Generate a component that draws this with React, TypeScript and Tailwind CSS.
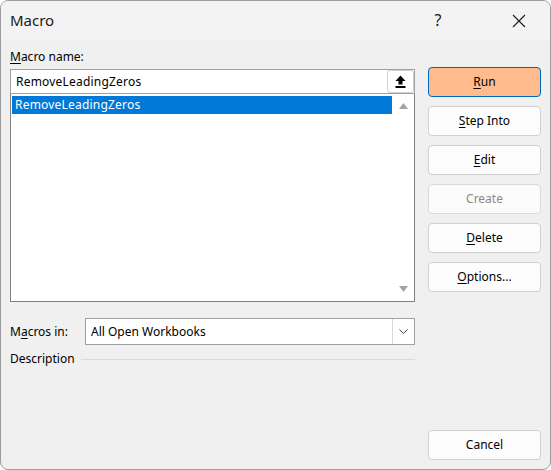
import React from 'react';

const font = { fontFamily: '"Noto Sans", "Open Sans", sans-serif' };

const DlgButton = ({ children, primary, disabled }: { children: React.ReactNode, primary?: boolean, disabled?: boolean }) => (
  <button
    className={
      primary
        ? 'w-[113px] h-[30px] rounded-[4px] border border-[#0067c0] bg-[#ffbb8c] text-[12px] text-black'
        : disabled
          ? 'w-[113px] h-[30px] rounded-[4px] border border-[#d9d9d9] bg-[#fbfbfb] text-[12px] text-[#8a8a8a]'
          : 'w-[113px] h-[30px] rounded-[4px] border border-[#d0d0d0] bg-[#fdfdfd] text-[12px] text-black'
    }
  >
    {children}
  </button>
);

export default function App() {
  return (
    <div className="w-[551px] h-[470px] bg-white" style={font}>
      <div className="w-[551px] h-[470px] bg-[#f0f0f0] border border-[#9c9c9c] rounded-[8px] overflow-hidden flex flex-col">
        {/* title bar */}
        <div className="h-[38px] bg-[#f3f3f3] flex items-center pl-[9px] shrink-0">
          <span className="text-[15px] text-[#1a1a1a]">Macro</span>
          <span className="ml-auto text-[16px] text-[#1a1a1a] w-[20px] text-center mr-[64px] mt-[-1px]">?</span>
          <svg width="14" height="14" viewBox="0 0 14 14" className="mr-[24px] mt-[1px]">
            <path d="M1 1 L13 13 M13 1 L1 13" stroke="#1a1a1a" strokeWidth="1.1" />
          </svg>
        </div>

        <div className="flex pl-[9px] flex-1">
          {/* left column */}
          <div className="w-[405px] flex flex-col">
            <div className="text-[12px] leading-[16px] mt-[10px] text-black">
              <span className="underline underline-offset-2">M</span>acro name:
            </div>
            <div className="mt-[4px] h-[25px] bg-white border border-[#a0a0a0] flex items-center relative">
              <span className="text-[12px] pl-[5px] text-black tracking-[0.2px]">RemoveLeadingZeros</span>
              <div className="absolute right-0 top-0 w-[27px] h-[23px] bg-white border border-[#d0d0d0] rounded-[3px] flex items-center justify-center">
                <svg width="11" height="13" viewBox="0 0 11 13">
                  <path d="M5.5 0.5 L10.5 6 L7.5 6 L7.5 9.5 L3.5 9.5 L3.5 6 L0.5 6 Z" fill="#000" />
                  <rect x="0.5" y="11" width="10" height="2" fill="#000" />
                </svg>
              </div>
            </div>
            <div className="h-[208px] bg-white border-x border-b border-[#828282] flex">
              <div className="flex-1 pl-[1px] pt-[2px]">
                <div className="h-[18px] bg-[#0078d7] text-white text-[12px] leading-[18px] pl-[3px] tracking-[0.2px]">RemoveLeadingZeros</div>
              </div>
              <div className="w-[22px] flex flex-col items-center justify-between py-[9px]">
                <svg width="9" height="6" viewBox="0 0 9 6"><path d="M4.5 0 L9 6 L0 6 Z" fill="#a3a3a3" /></svg>
                <svg width="9" height="6" viewBox="0 0 9 6"><path d="M0 0 L9 0 L4.5 6 Z" fill="#a3a3a3" /></svg>
              </div>
            </div>

            <div className="flex items-center mt-[16px]">
              <span className="text-[12px] w-[75px] text-black">
                M<span className="underline underline-offset-2">a</span>cros in:
              </span>
              <div className="flex-1 h-[27px] bg-white border border-[#a0a0a0] flex items-center">
                <span className="text-[12px] pl-[5px] flex-1 text-black">All Open Workbooks</span>
                <div className="w-[22px] h-full border-l border-[#d9d9d9] flex items-center justify-center">
                  <svg width="9" height="5" viewBox="0 0 9 5"><path d="M0.5 0.5 L4.5 4.5 L8.5 0.5" stroke="#444" strokeWidth="1" fill="none" /></svg>
                </div>
              </div>
            </div>

            <div className="flex items-center mt-[5px]">
              <span className="text-[12px] text-black">Description</span>
              <div className="flex-1 ml-[6px] h-px bg-[#dadada]" />
            </div>
          </div>

          {/* right column */}
          <div className="ml-[13px] flex flex-col pt-[28px] pb-[9px]">
            <div className="flex flex-col gap-[9px]">
              <DlgButton primary><span className="underline underline-offset-2">R</span>un</DlgButton>
              <DlgButton><span className="underline underline-offset-2">S</span>tep Into</DlgButton>
              <DlgButton><span className="underline underline-offset-2">E</span>dit</DlgButton>
              <DlgButton disabled>Create</DlgButton>
              <DlgButton><span className="underline underline-offset-2">D</span>elete</DlgButton>
              <DlgButton><span className="underline underline-offset-2">O</span>ptions...</DlgButton>
            </div>
            <div className="mt-auto">
              <DlgButton>Cancel</DlgButton>
            </div>
          </div>
        </div>
      </div>
    </div>
  );
}
